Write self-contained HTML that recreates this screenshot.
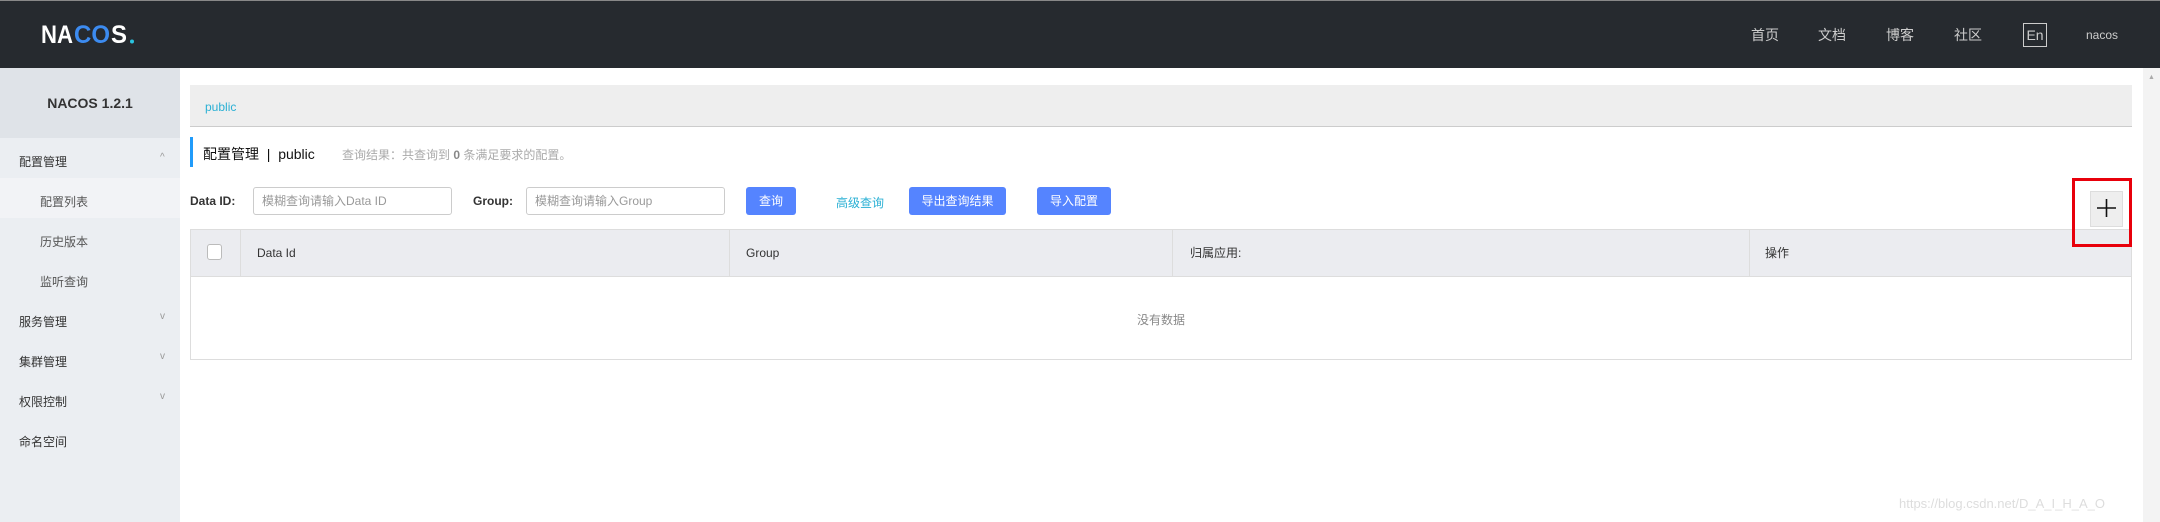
<!DOCTYPE html>
<html><head><meta charset="utf-8"><style>
*{margin:0;padding:0;box-sizing:border-box}
body{width:2160px;height:522px;overflow:hidden;background:#fff;font-family:"Liberation Sans","Noto Sans CJK SC",sans-serif;font-size:12px;color:#333;position:relative}
.a{position:absolute;white-space:nowrap}
.hdr{left:0;top:0;width:2160px;height:68px;background:#262a2f;border-top:1px solid #888}
.nav{color:#ccc;font-size:14px;top:25px}
.side{left:0;top:68px;width:180px;height:454px;background:#ebeef2}
.sidetop{left:0;top:68px;width:180px;height:70px;background:#dfe3e8;font-weight:bold;font-size:14px;text-align:center;line-height:70px;color:#333}
.mi{left:19px;font-size:12px;color:#333}
.sub{left:40px;font-size:12px;color:#555}
.chev{left:160px;color:#999;font-size:10px}
.btn{background:#5584ff;color:#fff;border-radius:3px;height:28px;line-height:28px;text-align:center;top:187px;font-size:12px}
.inp{top:187px;height:28px;border:1px solid #ccc;border-radius:3px;color:#999;line-height:26px;padding-left:8px;font-size:12px}
.th{top:229px;line-height:48px;font-size:12px;color:#333}
.vl{top:229px;width:1px;height:48px;background:#ddd}
</style></head><body>
<div class="a hdr"></div>
<svg class="a" style="left:41px;top:24px" width="100" height="22"><text x="0" y="19" font-family="Liberation Sans" font-weight="bold" font-size="25" fill="#fff" textLength="32" lengthAdjust="spacingAndGlyphs">NA</text><text x="33" y="19" font-family="Liberation Sans" font-weight="bold" font-size="25" fill="#3c8bf0" textLength="36" lengthAdjust="spacingAndGlyphs">CO</text><text x="70" y="19" font-family="Liberation Sans" font-weight="bold" font-size="25" fill="#fff" textLength="16" lengthAdjust="spacingAndGlyphs">S</text><circle cx="91" cy="17.5" r="2" fill="#2ac4e0"/></svg>
<div class="a nav" style="left:1751px">首页</div>
<div class="a nav" style="left:1818px">文档</div>
<div class="a nav" style="left:1886px">博客</div>
<div class="a nav" style="left:1954px">社区</div>
<div class="a" style="left:2023px;top:23px;width:24px;height:24px;border:1px solid #ccc;color:#ccc;font-size:14px;text-align:center;line-height:22px">En</div>
<div class="a" style="left:2086px;top:28px;color:#ccc;font-size:12px">nacos</div>

<div class="a side"></div>
<div class="a sidetop">NACOS 1.2.1</div>
<div class="a" style="left:0;top:178px;width:180px;height:40px;background:#f2f3f6"></div>
<div class="a mi" style="top:153px">配置管理</div><div class="a chev" style="top:152px">^</div>
<div class="a sub" style="top:193px">配置列表</div>
<div class="a sub" style="top:233px">历史版本</div>
<div class="a sub" style="top:273px">监听查询</div>
<div class="a mi" style="top:313px">服务管理</div><div class="a chev" style="top:311px">v</div>
<div class="a mi" style="top:353px">集群管理</div><div class="a chev" style="top:351px">v</div>
<div class="a mi" style="top:393px">权限控制</div><div class="a chev" style="top:391px">v</div>
<div class="a mi" style="top:433px">命名空间</div>

<div class="a" style="left:190px;top:85px;width:1942px;height:42px;background:#eee;border-bottom:1px solid #ccc"></div>
<div class="a" style="left:205px;top:100px;color:#2ab0d4;font-size:12px">public</div>
<div class="a" style="left:190px;top:137px;width:3px;height:30px;background:#209bfa"></div>
<div class="a" style="left:203px;top:144px;font-size:14px;color:#111">配置管理 &nbsp;|&nbsp; public</div>
<div class="a" style="left:342px;top:146px;font-size:12px;color:#aaa">查询结果：共查询到 <b style="color:#888">0</b> 条满足要求的配置。</div>

<div class="a" style="left:190px;top:194px;font-weight:bold;color:#333">Data ID:</div>
<div class="a inp" style="left:253px;width:199px">模糊查询请输入Data ID</div>
<div class="a" style="left:473px;top:194px;font-weight:bold;color:#333">Group:</div>
<div class="a inp" style="left:526px;width:199px">模糊查询请输入Group</div>
<div class="a btn" style="left:746px;width:50px">查询</div>
<div class="a" style="left:836px;top:194px;color:#2ab0d4">高级查询</div>
<div class="a btn" style="left:909px;width:97px">导出查询结果</div>
<div class="a btn" style="left:1037px;width:74px">导入配置</div>

<div class="a" style="left:190px;top:229px;width:1942px;height:131px;border:1px solid #ddd"></div>
<div class="a" style="left:190px;top:229px;width:1942px;height:48px;background:#ebecf0;border:1px solid #ddd"></div>
<div class="a" style="left:207px;top:244px;width:15px;height:16px;border:1px solid #bbb;border-radius:3px;background:#fff"></div>
<div class="a vl" style="left:240px"></div><div class="a vl" style="left:729px"></div><div class="a vl" style="left:1172px"></div><div class="a vl" style="left:1749px"></div>
<div class="a th" style="left:257px">Data Id</div>
<div class="a th" style="left:746px">Group</div>
<div class="a th" style="left:1190px">归属应用:</div>
<div class="a th" style="left:1765px">操作</div>
<div class="a" style="left:1137px;top:311px;color:#888">没有数据</div>

<div class="a" style="left:2090px;top:191px;width:33px;height:36px;background:#eee;border:1px solid #ddd"></div>
<svg class="a" style="left:2090px;top:191px" width="33" height="36"><path d="M16.5 8V26M7 17H26" stroke="#111" stroke-width="1.6"/></svg>
<div class="a" style="left:2072px;top:178px;width:60px;height:69px;border:3px solid #e8000b"></div>

<div class="a" style="left:2143px;top:68px;width:17px;height:454px;background:#f3f3f3"></div>
<div class="a" style="left:2148px;top:74px;color:#aaa;font-size:7px">▲</div>
<div class="a" style="left:1899px;top:496px;color:#ddd;font-size:13px">https://blog.csdn.net/D_A_I_H_A_O</div>
</body></html>
